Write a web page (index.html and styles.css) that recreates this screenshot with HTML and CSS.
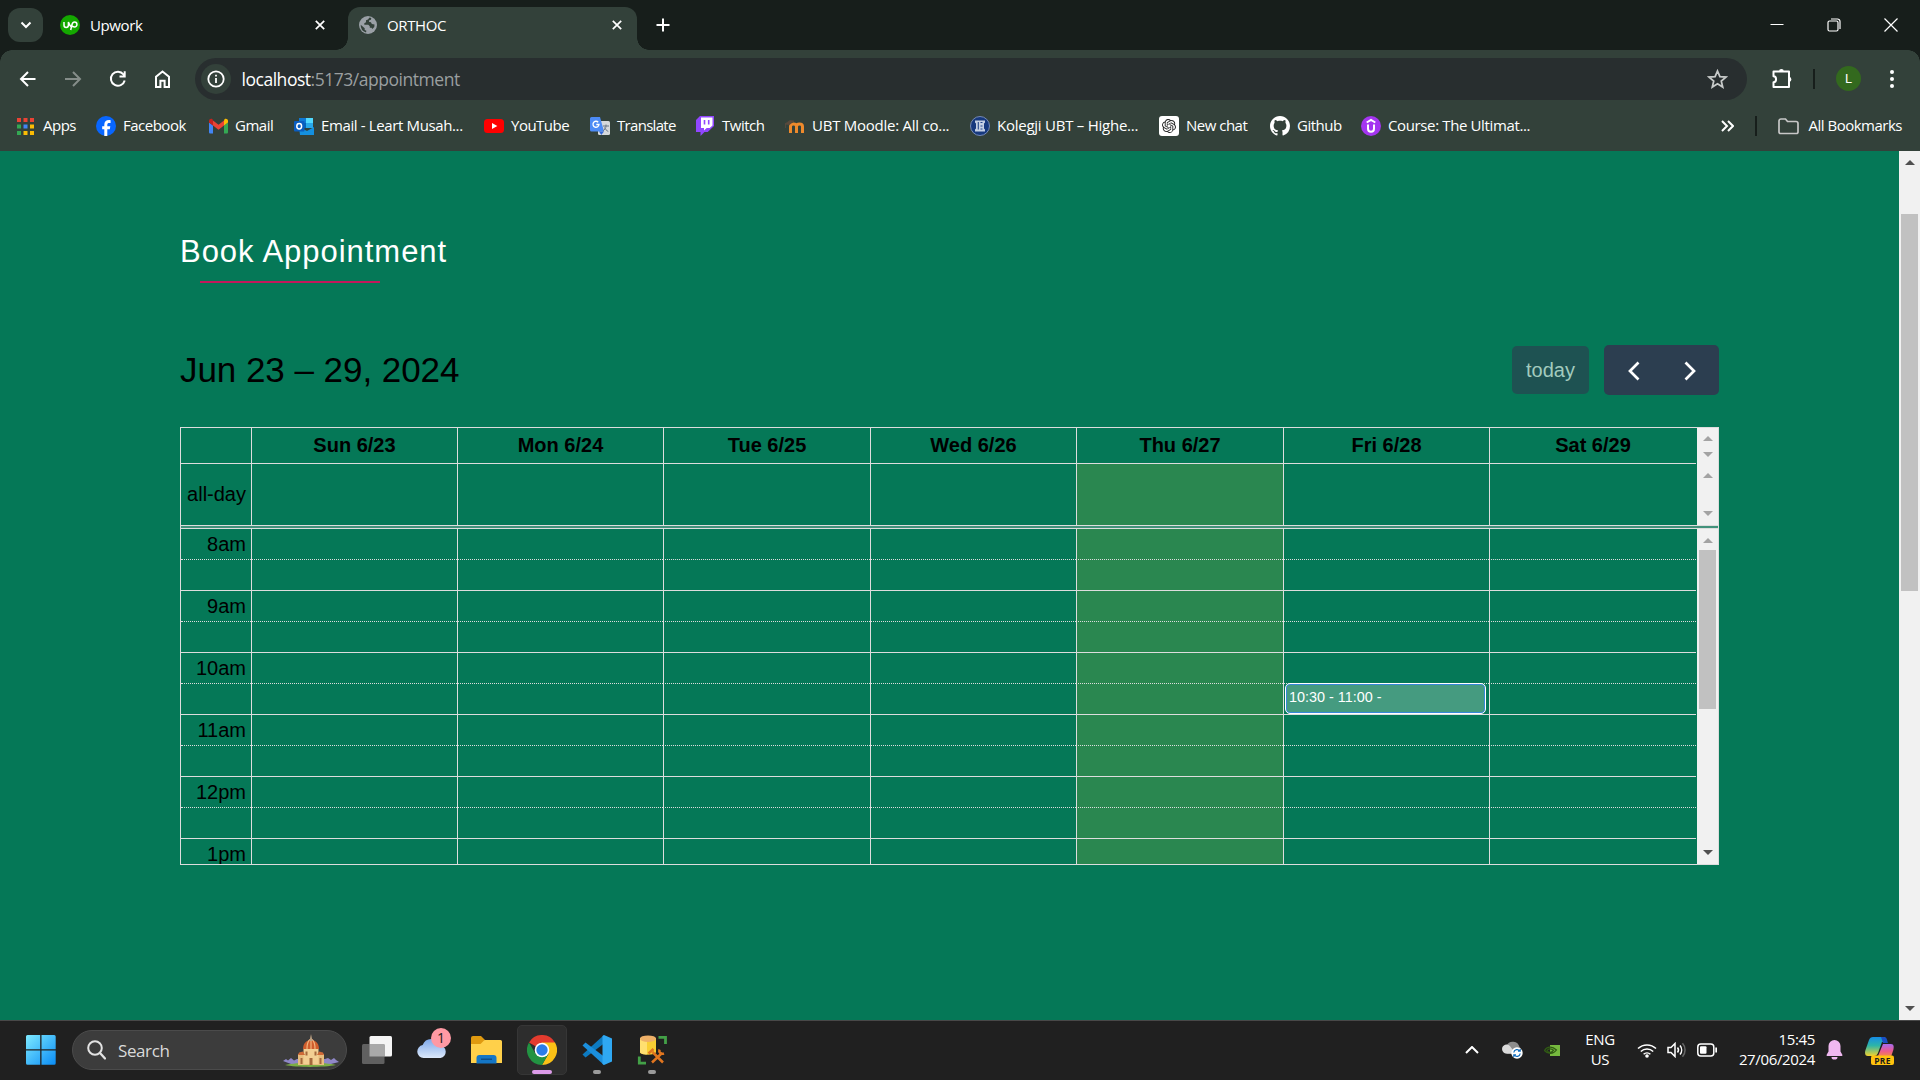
FILE: index.html
```html
<!DOCTYPE html>
<html lang="en">
<head>
<meta charset="utf-8">
<title>ORTHOC</title>
<link rel="stylesheet" href="styles.css">
</head>
<body>
<div class="screen">
  <header class="tabstrip">
    <button class="tab-search"><svg width="12" height="8" viewBox="0 0 12 8"><path d="M1.5 1.5 6 6l4.500-4.500" class="ln w2"/></svg></button>
    <div class="tab idle">
      <svg width="20" height="20" viewBox="0 0 20 20"><circle cx="10" cy="10" r="10" fill="#14a800"/><path d="M4 7v3.200a2.200 2.200 0 0 0 4.400 0V7c1 3 2 4.500 3.400 5M10.700 15l1.300-5.500c.5-1.800 1.500-2.500 2.500-2.500a2.400 2.400 0 0 1 0 4.900c-1.500 0-2.500-.8-3.500-2" class="ln w15"/></svg>
      <span class="tab-title upwork">Upwork</span>
      <svg class="x" width="10" height="10" viewBox="0 0 10 10"><path d="M.8.8l8.400 8.400M9.200.8.8 9.200" class="ln w17"/></svg>
    </div>
    <div class="tab active">
      <svg width="18" height="18" viewBox="0 0 18 18"><circle cx="9" cy="9" r="9" fill="#9aa0a6"/><path d="M10.500 1.500 9 3.600l-2 .7v1.900l-1.700 1v1.500h4l1.500 1.600v1.400h1.700l.8 1.200 2-1.800.2-2.700-2.600-.4-1-1.700-2-.6.400-1.500 1.600-.4.4-1.700zM1.700 8.800l4 3.500v1.600l1.700.9-.4 1.700A7.700 7.700 0 0 1 1.700 8.800z" fill="#33413a"/></svg>
      <span class="tab-title orthoc">ORTHOC</span>
      <svg class="x" width="10" height="10" viewBox="0 0 10 10"><path d="M.8.8l8.400 8.400M9.200.8.8 9.200" class="ln w17"/></svg>
    </div>
    <svg class="plus" width="14" height="14" viewBox="0 0 14 14"><path d="M7 .5v13M.5 7h13" class="ln w2"/></svg>
    <div class="win-controls">
      <svg width="14" height="14" viewBox="0 0 14 14"><path d="M.5 6.500h13" class="ln w1"/></svg>
      <svg width="14" height="14" viewBox="0 0 14 14"><rect x="1" y="3" width="10" height="10" rx="1.500" class="ln w12"/><path d="M4 1h6.500A2.500 2.500 0 0 1 13 3.500V11" class="ln w12"/></svg>
      <svg width="14" height="14" viewBox="0 0 14 14"><path d="M.5.5l13 13M13.500.5l-13 13" class="ln w12"/></svg>
    </div>
  </header>

  <nav class="toolbar">
    <div class="nav-icons">
      <svg width="18" height="18" viewBox="0 0 18 18"><path d="M16.500 9H2.500M9 2 2 9l7 7" class="ln w2"/></svg>
      <svg class="dim" width="18" height="18" viewBox="0 0 18 18"><path d="M1 9h14.500M9 2l7 7-7 7" class="ln w2"/></svg>
      <svg width="18" height="18" viewBox="0 0 18 18"><path d="M15.700 10.500A7 7 0 1 1 14.500 4.500L16 6.300M15.700 1.200v5.300H10.500" class="ln w2"/></svg>
      <svg width="18" height="20" viewBox="0 0 18 20"><path d="M2 18V7.800L8.500 2.500 15 7.800V18h-4.400v-6.300H6.400V18z" class="ln w2"/></svg>
    </div>
    <div class="omnibox">
      <span class="site-info"><svg width="18" height="18" viewBox="0 0 18 18"><circle cx="9" cy="9" r="7.700" class="ln w18"/><path d="M9 8v5M9 4.800v1.700" class="ln w18"/></svg></span>
      <span class="url"><b>localhost</b>:5173/appointment</span>
      <svg class="star" width="21" height="20" viewBox="0 0 21 20"><path d="M10.500 2l2.400 5.600 6 .5-4.600 4 1.400 5.900-5.200-3.200L5.300 18l1.400-5.900-4.600-4 6-.5z" fill="none" stroke="#c7cac9" stroke-width="1.800"/></svg>
    </div>
    <svg class="ext" width="22" height="22" viewBox="0 0 22 22"><path d="M2.500 3.500H18V19H2.500v-4.700c3.400-.2 3.400-5.800 0-6z" class="ln w2" stroke-linejoin="round"/><path d="M8 3.500a2.400 2.400 0 0 1 4.800 0zM18 9a2.400 2.400 0 0 1 0 4.800z" fill="#fff"/></svg>
    <i class="sep"></i>
    <span class="avatar">L</span>
    <svg class="kebab" width="6" height="22" viewBox="0 0 6 22"><g fill="#fff"><circle cx="3" cy="4" r="2"/><circle cx="3" cy="11" r="2"/><circle cx="3" cy="18" r="2"/></g></svg>
  </nav>

  <nav class="bookmarks">
    <div class="bm-list">
      <a><svg class="apps" width="17" height="17" viewBox="0 0 17 17"><path d="M0 0h4v4H0zM6.500 0h4v4h-4zM13 0h4v4h-4z" fill="#ea4335"/><path d="M0 6.500h4v4H0z" fill="#34a853"/><path d="M6.500 6.500h4v4h-4z" fill="#4285f4"/><path d="M13 6.500h4v4h-4zM6.500 13h4v4h-4zM13 13h4v4h-4z" fill="#fbbc04"/><path d="M0 13h4v4H0z" fill="#34a853"/></svg><span>Apps</span></a>
      <a><svg width="20" height="20" viewBox="0 0 20 20"><circle cx="10" cy="10" r="10" fill="#0866ff"/><path d="M8.300 20v-6.700H6.200v-3h2.100V9c0-3.400 1.600-5 4.800-5 .6 0 1.200.1 1.500.2V7h-1.300c-1.500 0-2 .6-2 2v1.300h3l-.5 3h-2.500V20z" fill="#fff"/></svg><span>Facebook</span></a>
      <a><svg width="19" height="20" viewBox="0 0 19 20"><path d="M1.300 17.500H4V9.500L0 6.500v9.700c0 .7.600 1.300 1.300 1.300z" fill="#4285f4"/><path d="M15 17.500h2.700c.7 0 1.300-.6 1.300-1.300V6.500l-4 3z" fill="#34a853"/><path d="M15 4.500v5l4-3V5c0-2-2.200-2.700-3.500-1.700z" fill="#fbbc04"/><path d="M4 9.500v-5l5.500 4.200L15 4.500v5l-5.500 4.200z" fill="#ea4335"/><path d="M0 5v1.500l4 3v-5L3.500 3.300C2.200 2.300 0 3 0 5z" fill="#c5221f"/></svg><span>Gmail</span></a>
      <a><svg width="20" height="20" viewBox="0 0 20 20"><path d="M5 2h13a1 1 0 0 1 1 1v8H5z" fill="#0f78d4"/><path d="M12 2h7v5h-7z" fill="#50d9ff"/><path d="M5 7h7v5H5z" fill="#0364b8"/><path d="M12 7h7v5h-7z" fill="#28a8ea"/><path d="M5 11l8 4 7-4v8H6z" fill="#1490df"/><rect y="5" width="10.500" height="10.500" rx="1" fill="#0a5dc0"/><ellipse cx="5.200" cy="10.200" rx="2.400" ry="2.700" class="ln w15"/></svg><span class="ls-email">Email - Leart Musah...</span></a>
      <a><svg width="20" height="20" viewBox="0 0 20 20"><rect y="3" width="20" height="14" rx="3.500" fill="#f00"/><path d="M8 7l5.300 3L8 13z" fill="#fff"/></svg><span>YouTube</span></a>
      <a><svg width="20" height="20" viewBox="0 0 20 20"><rect x="8" y="5" width="12" height="14" rx="1.500" fill="#d6d9dc"/><path d="M1.500 1H10l4 14.500H1.500A1.500 1.500 0 0 1 0 14V2.500A1.500 1.500 0 0 1 1.500 1z" fill="#4c8bf5"/><path d="M9 15.500h5L11.300 19z" fill="#3367d6"/><path d="M8.200 6.200A3 3 0 1 0 9 8.500H6.300" class="ln w13"/><path d="M13 10h6M16 8.500V10c0 2-1.500 4-3 4.700M14.500 11.500c.8 1.800 2 3 3.800 4" fill="none" stroke="#6b7785"/></svg><span class="ls-tight">Translate</span></a>
      <a><svg width="19" height="20" viewBox="0 0 19 20"><path d="M4 0 0 4v12h4.500v4l4-4h3.200L18 10V0z" fill="#9146ff"/><path d="M5 1.500h11.500v8L13.700 12h-3L8 14.500V12H5z" fill="#fff"/><path d="M8.500 4v4.500M12.700 4v4.500" stroke="#9146ff" stroke-width="1.600"/></svg><span>Twitch</span></a>
      <a><svg width="20" height="20" viewBox="0 0 20 20"><path d="M5.500 17V10.500c0-3.500 6-3.500 6 0V17m0-6.500c0-3.500 6-3.500 6 0V17" fill="none" stroke="#ee8a2c" stroke-width="3"/><path d="M0 8l5-3.500 4 .5-4.500 3.500zM.5 8v4" fill="#5b4a3c" stroke="#5b4a3c" stroke-width=".8"/></svg><span class="ls-wide">UBT Moodle: All co...</span></a>
      <a><svg width="20" height="20" viewBox="0 0 20 20"><circle cx="10" cy="10" r="9.500" fill="#17397e" stroke="#7589b6"/><path d="M5 4.500h10v2l-1 1v5l1 1v2H5v-2l1-1v-5l-1-1z" fill="#c5d0e4"/><path d="M8.300 6v7.500M10.500 6.500h2M10.500 10h2M10.500 13h2" stroke="#27488b" stroke-width="1.100"/></svg><span class="ls-wide">Kolegji UBT – Highe...</span></a>
      <a><svg width="20" height="20" viewBox="0 0 20 20"><rect width="20" height="20" rx="3" fill="#fff"/><path transform="translate(3 3) scale(.583)" fill="#222" d="M22.282 9.821a5.985 5.985 0 0 0-.516-4.910 6.046 6.046 0 0 0-6.510-2.900A6.065 6.065 0 0 0 4.981 4.182a5.985 5.985 0 0 0-3.998 2.900 6.046 6.046 0 0 0 .743 7.097 5.980 5.980 0 0 0 .510 4.911 6.051 6.051 0 0 0 6.515 2.900A5.985 5.985 0 0 0 13.260 24a6.056 6.056 0 0 0 5.772-4.206 5.990 5.990 0 0 0 3.998-2.900 6.056 6.056 0 0 0-.748-7.073zM13.260 22.430a4.476 4.476 0 0 1-2.876-1.041l.142-.080 4.778-2.758a.795.795 0 0 0 .393-.681v-6.737l2.020 1.169a.071.071 0 0 1 .038.052v5.583a4.504 4.504 0 0 1-4.495 4.493zM3.600 18.304a4.471 4.471 0 0 1-.535-3.014l.142.085 4.783 2.758a.771.771 0 0 0 .780 0l5.843-3.369v2.332a.080.080 0 0 1-.033.062L9.740 19.950a4.499 4.499 0 0 1-6.140-1.646zM2.341 7.896a4.485 4.485 0 0 1 2.365-1.973V11.600a.766.766 0 0 0 .388.676l5.814 3.355-2.020 1.168a.076.076 0 0 1-.071 0l-4.830-2.786A4.504 4.504 0 0 1 2.341 7.896zm16.596 3.855-5.833-3.387L15.119 7.200a.076.076 0 0 1 .071 0l4.830 2.791a4.494 4.494 0 0 1-.676 8.105v-5.678a.790.790 0 0 0-.407-.667zm2.010-3.023-.141-.085-4.774-2.782a.776.776 0 0 0-.785 0L9.409 9.230V6.897a.066.066 0 0 1 .028-.061l4.830-2.787a4.499 4.499 0 0 1 6.680 4.660zM8.307 12.863l-2.020-1.164a.080.080 0 0 1-.038-.057V6.074a4.499 4.499 0 0 1 7.376-3.453l-.142.080-4.778 2.758a.795.795 0 0 0-.393.682zm1.097-2.366 2.602-1.500 2.607 1.500v3l-2.597 1.500-2.607-1.500z"/></svg><span>New chat</span></a>
      <a><svg width="20" height="20" viewBox="0 0 16 16"><path fill="#fff" d="M8 0C3.580 0 0 3.580 0 8c0 3.540 2.290 6.530 5.470 7.590.4.070.55-.17.55-.38 0-.19-.01-.82-.01-1.490-2.010.37-2.530-.49-2.690-.94-.09-.23-.48-.94-.82-1.130-.28-.15-.68-.52-.01-.53.63-.01 1.080.58 1.230.82.72 1.210 1.870.87 2.330.66.070-.52.28-.87.51-1.070-1.780-.2-3.640-.89-3.640-3.950 0-.87.31-1.590.82-2.150-.08-.2-.36-1.020.08-2.120 0 0 .67-.21 2.200.82.640-.18 1.320-.27 2-.27s1.360.09 2 .27c1.530-1.040 2.200-.82 2.200-.82.44 1.100.16 1.920.08 2.120.51.56.82 1.270.82 2.150 0 3.070-1.870 3.750-3.650 3.950.29.25.54.73.54 1.480 0 1.070-.01 1.930-.01 2.200 0 .21.15.46.55.38A8.010 8.010 0 0 0 16 8c0-4.420-3.580-8-8-8z"/></svg><span>Github</span></a>
      <a><svg width="20" height="20" viewBox="0 0 20 20"><circle cx="10" cy="10" r="10" fill="#a435f0"/><path d="M5.700 6.500 10 4l4.300 2.500M7 8.500v4.300c0 4 6 4 6 0V8.500" class="ln w2"/></svg><span class="ls-email">Course: The Ultimat...</span></a>
    </div>
    <svg class="more" width="13" height="12" viewBox="0 0 13 12"><path d="M1 1l5 5-5 5M7 1l5 5-5 5" class="ln w2"/></svg>
    <i class="sep"></i>
    <svg class="folder" width="21" height="17" viewBox="0 0 21 17"><path d="M1 14V3a2 2 0 0 1 2-2h4.500l2 2.500H18a2 2 0 0 1 2 2V14a1.500 1.500 0 0 1-1.500 1.500h-16A1.500 1.500 0 0 1 1 14z" fill="none" stroke="#c7c7c7" stroke-width="1.700"/></svg>
    <span class="all">All Bookmarks</span>
  </nav>

  <main class="viewport">
    <section class="page">
      <h2 class="heading">Book Appointment</h2>
      <div class="rule"></div>
      <div class="cal-toolbar">
        <h1>Jun 23 – 29, 2024</h1>
        <button class="today-btn">today</button>
        <div class="btn-group">
          <svg width="12" height="20" viewBox="0 0 12 20"><path d="M10.500 1.500 2 10l8.500 8.500" class="ln w27"/></svg>
          <svg width="12" height="20" viewBox="0 0 12 20"><path d="M1.500 1.500 10 10l-8.500 8.500" class="ln w27"/></svg>
        </div>
      </div>
      <div class="calendar">
        <div class="cal-row head">
          <span class="axis"></span><b>Sun 6/23</b><b>Mon 6/24</b><b>Tue 6/25</b><b>Wed 6/26</b><b>Thu 6/27</b><b>Fri 6/28</b><b>Sat 6/29</b>
          <i class="sb"><i class="arrow up"></i><i class="arrow down"></i></i>
        </div>
        <div class="cal-row allday">
          <span class="axis">all-day</span><span></span><span></span><span></span><span></span><span class="now"></span><span></span><span></span>
          <i class="sb"><i class="arrow up"></i><i class="arrow down"></i></i>
        </div>
        <div class="divider"></div>
        <div class="cal-body">
          <div class="slots">
            <div class="cal-row slot"><span class="axis">8am</span><span></span><span></span><span></span><span></span><span class="now"></span><span></span><span></span></div>
            <div class="cal-row slot minor"><span class="axis"></span><span></span><span></span><span></span><span></span><span class="now"></span><span></span><span></span></div>
            <div class="cal-row slot"><span class="axis">9am</span><span></span><span></span><span></span><span></span><span class="now"></span><span></span><span></span></div>
            <div class="cal-row slot minor"><span class="axis"></span><span></span><span></span><span></span><span></span><span class="now"></span><span></span><span></span></div>
            <div class="cal-row slot"><span class="axis">10am</span><span></span><span></span><span></span><span></span><span class="now"></span><span></span><span></span></div>
            <div class="cal-row slot minor"><span class="axis"></span><span></span><span></span><span></span><span></span><span class="now"></span><span class="booked"><span class="event">10:30 - 11:00 -</span></span><span></span></div>
            <div class="cal-row slot"><span class="axis">11am</span><span></span><span></span><span></span><span></span><span class="now"></span><span></span><span></span></div>
            <div class="cal-row slot minor"><span class="axis"></span><span></span><span></span><span></span><span></span><span class="now"></span><span></span><span></span></div>
            <div class="cal-row slot"><span class="axis">12pm</span><span></span><span></span><span></span><span></span><span class="now"></span><span></span><span></span></div>
            <div class="cal-row slot minor"><span class="axis"></span><span></span><span></span><span></span><span></span><span class="now"></span><span></span><span></span></div>
            <div class="cal-row slot"><span class="axis">1pm</span><span></span><span></span><span></span><span></span><span class="now"></span><span></span><span></span></div>
          </div>
          <i class="sb body-sb"><i class="arrow up"></i><i class="thumb"></i><i class="arrow down dark"></i></i>
        </div>
      </div>
    </section>
    <i class="page-sb"><i class="arrow up dark"></i><i class="thumb"></i><i class="arrow down dark"></i></i>
  </main>

  <footer class="taskbar">
    <svg class="win" width="30" height="30" viewBox="0 0 30 30"><defs><linearGradient id="wg" x2="1" y2="1"><stop stop-color="#7eeaff"/><stop offset="1" stop-color="#0a8cf5"/></linearGradient></defs><path d="M1.500 0h12.700v14.200H0V1.500A1.500 1.500 0 0 1 1.500 0zM15.500 0h12.700A1.500 1.500 0 0 1 29.700 1.500v12.700H15.500zM0 15.500h14.200v14.200H1.500A1.500 1.500 0 0 1 0 28.200zM15.500 15.500h14.200v12.700a1.500 1.500 0 0 1-1.500 1.500H15.500z" fill="url(#wg)"/></svg>
    <div class="search">
      <svg width="19" height="20" viewBox="0 0 19 20"><circle cx="8" cy="8" r="6.800" fill="none" stroke="#e3e3e3" stroke-width="2"/><path d="M13 13l5 5.500" stroke="#e3e3e3" stroke-width="2.300" stroke-linecap="round"/></svg>
      <span>Search</span>
      <svg class="duomo" width="56" height="33" viewBox="0 0 56 33"><path d="M0 27l3-2 2 1.500L8 24l3 2.500 3-1.500h28l3-1 3 2 3-2 2 2 3 2-8 2H8z" fill="#8f87c7"/><path d="M2 31c12-3 40-3 51 0-12 2.500-40 2.500-51 0z" fill="#7cae45"/><path d="M15 20h26v11H15z" fill="#e6bd7f"/><path d="M20.500 15h15v15h-15z" fill="#f2cf93"/><path d="M20 15c0-12 16-12 16 0z" fill="#cf5d2c"/><path d="M24 15c0-5 1-8 3-9.500M32 15c0-5-1-8-3-9.500M28 15V6" stroke="#f0b27c" stroke-width="1.200" fill="none"/><path d="M26.500 7 28 0l1.500 7z" fill="#b9a083"/><path d="M15 21l1-2.500 4-1 2 3.500zM34 21l2-3.500 4 1 1 2.500z" fill="#cf6a37"/><path d="M22.500 17.500h2v4h-2zM31.500 17.500h2v4h-2zM26.500 24h3v7h-3zM17.500 24h2v6h-2zM36.500 24h2v6h-2z" fill="#a3683c"/></svg>
    </div>
    <svg class="taskview" width="30" height="30" viewBox="0 0 30 30"><rect x="7.500" y="1" width="22.500" height="20.500" rx="1.500" fill="#f5f5f5"/><rect y="9" width="22.500" height="20" rx="1.500" fill="#606060"/><path d="M7.500 9h15v12.500h-15z" fill="#a9a9a9"/></svg>
    <div class="cloud">
      <svg width="30" height="22" viewBox="0 0 30 22"><defs><linearGradient id="cg" x2="0" y2="1"><stop stop-color="#7fa9ea"/><stop offset="1" stop-color="#dce9fb"/></linearGradient></defs><path d="M6.500 21a6.500 6.500 0 0 1-.8-12.900A9 9 0 0 1 22.800 8.500 6.300 6.300 0 0 1 23.500 21z" fill="url(#cg)"/></svg>
      <span class="badge">1</span>
    </div>
    <svg class="explorer" width="31" height="28" viewBox="0 0 31 28"><path d="M0 2a2 2 0 0 1 2-2h8l3.500 3.500V8H0z" fill="#e09a10"/><path d="M0 8h9.500l4-4H29.500A1.500 1.500 0 0 1 31 5.500V27H0z" fill="#ffd04a"/><path d="M5.500 27.500V22a3 3 0 0 1 3-3h14a3 3 0 0 1 3 3v5.500z" fill="#1476c6"/><path d="M10 22.500h11V24H10z" fill="#0b4f8d"/></svg>
    <div class="app current"><svg width="30" height="30" viewBox="0 0 30 30"><path d="M15 15 2 7.500A15 15 0 0 1 28 7.500z" fill="#e33b2e"/><path d="M15 7.500h13A15 15 0 0 1 15 30l6.500-11.200z" fill="#fbc116"/><path d="M8.500 18.800 2 7.500A15 15 0 0 0 15 30l6.500-11.200z" fill="#229342"/><circle cx="15" cy="15" r="7.300" fill="#fff"/><circle cx="15" cy="15" r="5.700" fill="#2b7de9"/></svg><i class="mark"></i></div>
    <div class="app"><svg width="30" height="30" viewBox="0 0 30 30"><path d="M22 0 .5 19.500 3.500 22.500 22 8.500z" fill="#0d7ac0"/><path d="M22 30 .5 10.500 3.500 7.500 22 21.500z" fill="#1b8fdd"/><path d="M22 0l8 3.500v23L22 30l-1.500-1V1z" fill="#2fa8f3"/></svg><i class="mark"></i></div>
    <div class="app"><svg width="30" height="30" viewBox="0 0 30 30"><path d="M3 3v14c0 3.500 16 3.500 16 0V3z" fill="#f9cf33"/><path d="M3 3v14c0 1.500 3 2.500 7 2.600V3z" fill="#ffe070"/><ellipse cx="11" cy="3.700" rx="8" ry="3.300" fill="#eeb068"/><path d="M21.500 2.300h7V9M2.300 21.500v6.700H9" fill="none" stroke="#43a047" stroke-width="2.800"/><path d="M15 27.500 25 18M26 27.500 15.500 17M11.500 18.500l5-4.500M22.500 14.500c-1 3 1.500 5 4.500 4" stroke="#e0751f" stroke-width="2.500" fill="none"/></svg><i class="mark"></i></div>
    <div class="tray">
      <svg class="t-chev" width="14" height="8" viewBox="0 0 14 8"><path d="M1 7l6-6 6 6" class="ln w2"/></svg>
      <svg class="t-cloud" width="21" height="18" viewBox="0 0 21 18"><path d="M5 13A4.800 4.800 0 0 1 4.500 4.500 7 7 0 0 1 17.500 6 4 4 0 0 1 17 13z" fill="#8d8d8d"/><path d="M4.500 12.500a4.500 4.500 0 1 1 3.800-7l5 7z" fill="#dadada"/><circle cx="15" cy="12" r="5.700" fill="#fff"/><path d="M11.800 11.500a3.300 3.300 0 0 1 6-1.500M18.200 12.500a3.300 3.300 0 0 1-6 1.500M18.200 8v2.200H16M11.800 16v-2.200H14" fill="none" stroke="#0f6cbd" stroke-width="1.200"/></svg>
      <svg class="t-nv" width="16" height="11" viewBox="0 0 16 11"><path d="M6 0h10v11H6z" fill="#76b93e"/><path d="M.5 5.500C3 1.500 8 .8 12.500 5 9 9.500 4 9.500.5 5.500zM3 5.500c1.500-2 4-2.200 6.500-.2C7.500 8 4.500 8 3 5.500z" fill="none" stroke="#315c14" stroke-width="1.200"/></svg>
      <div class="lang">ENG<br>US</div>
      <svg class="t-wifi" width="20" height="15" viewBox="0 0 20 15"><path d="M1 5.500a13 13 0 0 1 18 0M3.800 8.500a9 9 0 0 1 12.400 0M6.600 11.300a5 5 0 0 1 6.800 0" class="ln w15"/><circle cx="10" cy="13" r="1.800" fill="#fff"/></svg>
      <svg class="t-vol" width="20" height="16" viewBox="0 0 20 16"><path d="M1 5.500h3L8 1.500v13L4 10.500H1z" class="ln w15"/><path d="M10.500 5.500a4 4 0 0 1 0 5M13 3.500a7 7 0 0 1 0 9" class="ln w15"/><path d="M15.500 1.300a10 10 0 0 1 0 13.400" fill="none" stroke="#666" stroke-width="1.500"/></svg>
      <svg class="t-bat" width="20" height="14" viewBox="0 0 20 14"><rect x=".8" y="1" width="16" height="12" rx="3" class="ln w15"/><rect x="3" y="3.300" width="6.500" height="7.500" rx="1" fill="#fff"/><path d="M18.300 4.500h1.700v5h-1.700z" fill="#fff"/></svg>
      <div class="clock">15:45<br>27/06/2024</div>
      <svg class="t-bell" width="17" height="20" viewBox="0 0 17 20"><path d="M8.500 0a6 6 0 0 1 6 6v5.500l2 3.500c0 .8-.5 1-1 1h-14c-.5 0-1-.2-1-1l2-3.500V6a6 6 0 0 1 6-6zM5.500 17h6a3 2.600 0 0 1-6 0z" fill="#efb8f0"/></svg>
      <svg class="t-cop" width="30" height="29" viewBox="0 0 30 29"><defs><linearGradient id="ca" x2="0" y2="1"><stop stop-color="#168de6"/><stop offset=".45" stop-color="#2cb5a8"/><stop offset="1" stop-color="#f2d22e"/></linearGradient><linearGradient id="cb" x2="0" y2="1"><stop stop-color="#a76cf0"/><stop offset=".6" stop-color="#ee5a8c"/><stop offset="1" stop-color="#f3874b"/></linearGradient></defs><path d="M8 1h10c3 0 3 2 4 5h-5l-4 11c-1 2-2 3-4 3H3c-3 0-3.500-3-2.500-6L4 4c.8-2 2-3 4-3z" fill="url(#ca)"/><path d="M16 1h3c3 0 3 3 4 6h-5z" fill="#1a4fc4"/><path d="M18 8h8c3 0 3 3 2.300 6l-2 6H13z" fill="url(#cb)"/><rect x="6" y="19.500" width="23" height="9.500" rx="2" fill="#ffc20e"/><text x="17.500" y="27.500" text-anchor="middle" class="pre">PRE</text></svg>
    </div>
  </footer>
</div>
</body>
</html>
```
FILE: styles.css
```css
* { box-sizing: border-box; }
body { margin: 0; overflow: hidden; background: #202020; }
h1, h2 { margin: 0; font-weight: 400; }
button { border: 0; padding: 0; font: inherit; }
svg { display: block; flex: none; }

.screen {
  width: 1920px; height: 1080px; display: flex; flex-direction: column;
  font-family: "Open Sans", "Noto Sans", sans-serif; color: #fff;
}
.ln { fill: none; stroke: #fff; }
.w1 { stroke-width: 1; } .w12 { stroke-width: 1.2; } .w13 { stroke-width: 1.3; }
.w15 { stroke-width: 1.5; } .w17 { stroke-width: 1.7; } .w18 { stroke-width: 1.8; }
.w2 { stroke-width: 2; } .w27 { stroke-width: 2.7; }

/* tab strip */
.tabstrip { height: 50px; flex: none; display: flex; align-items: center; background: #171e1b; padding-left: 8px; }
.tab-search { width: 35px; height: 34px; border-radius: 12px; background: #33413a; display: grid; place-items: center; }
.tab { display: flex; align-items: center; }
.tab-title { font-size: 15px; line-height: 20px; white-space: nowrap; }
.tab .x { margin-left: auto; }
.idle { width: 305px; padding: 0 23px 0 17px; gap: 10px; }
.active { position: relative; width: 289px; height: 43px; margin-top: 7px; padding: 0 15px 7px 11px; gap: 10px; background: #33413a; border-radius: 12px 12px 0 0; }
.active::before, .active::after { content: ""; position: absolute; bottom: 0; width: 12px; height: 12px; }
.active::before { left: -12px; background: radial-gradient(circle at 0 0, transparent 11.500px, #33413a 12px); }
.active::after { right: -12px; background: radial-gradient(circle at 100% 0, transparent 11.500px, #33413a 12px); }
.upwork, .orthoc { letter-spacing: -.4px; }
.plus { margin-left: 18.500px; }
.win-controls { margin-left: auto; display: flex; gap: 43px; padding-right: 22px; }

/* toolbar */
.toolbar {
  height: 58px; flex: none; display: flex; align-items: center;
  background:
    radial-gradient(circle at 12px 12px, #33413a 11.500px, #171e1b 12px) 0 0 / 12px 12px no-repeat,
    radial-gradient(circle at 0 12px, #33413a 11.500px, #171e1b 12px) 100% 0 / 12px 12px no-repeat,
    #33413a;
}
.nav-icons { display: flex; align-items: center; gap: 27px; width: 195px; padding-left: 18.500px; }
.dim { opacity: .4; }
.omnibox { width: 1552px; height: 42px; border-radius: 21px; background: #282e2f; display: flex; align-items: center; padding: 0 19px 0 6px; }
.site-info { width: 30px; height: 30px; border-radius: 50%; background: #33413a; display: grid; place-items: center; }
.url { margin-left: 10.500px; font-size: 17.500px; line-height: 24px; letter-spacing: -.47px; color: #9a9fa0; }
.url b { font-weight: 400; color: #fff; }
.star { margin-left: auto; }
.ext { margin-left: 24px; }
.sep { width: 2px; height: 20px; background: #171e1b; flex: none; }
.toolbar .sep { margin-left: 20px; }
.avatar { width: 25px; height: 25px; margin: -2px 0 0 21px; border-radius: 50%; background: #33691e; font: 13px/25px Roboto, sans-serif; text-align: center; }
.kebab { margin-left: 28px; }

/* bookmarks */
.bookmarks { height: 43px; flex: none; display: flex; align-items: center; padding-bottom: 7px; background: #33413a; font-size: 15px; line-height: 20px; letter-spacing: -.5px; white-space: nowrap; }
.bm-list { width: 1720.500px; padding-left: 17px; display: grid; grid-template-columns: 79px 113px 85px 190px 106px 106px 89px 185px 189px 111px 91px 180px; }
.bm-list a { display: flex; align-items: center; gap: 7px; }
.bm-list span, .all { padding-bottom: 2px; }
.ls-email { letter-spacing: -.37px; }
.ls-tight { letter-spacing: -.7px; }
.ls-wide { letter-spacing: -.25px; }
.apps { margin-right: 2px; }
.bookmarks .sep { margin-left: 21.500px; }
.folder { margin: 0 10px 0 20.500px; }

/* page */
.viewport { height: 869px; flex: none; display: flex; background: #057857; font-family: "Liberation Sans", Arial, sans-serif; }
.page { width: 1899px; padding: 81px 180px 0; color: #000; }
.heading { font-size: 31px; line-height: 40px; letter-spacing: .97px; color: #fff; }
.rule { width: 180px; height: 2px; margin: 9px 0 0 20px; background: #c2185b; }
.cal-toolbar { display: flex; align-items: center; margin-top: 62px; height: 50px; }
.cal-toolbar h1 { font-size: 35px; line-height: 40px; letter-spacing: -.05px; margin-right: auto; }
.today-btn { width: 77px; height: 48px; margin-right: 15px; border-radius: 5px; background: rgba(44, 62, 80, .65); color: #a2cbbe; font-size: 20px; }
.btn-group { width: 115px; height: 50px; display: flex; align-items: center; justify-content: space-between; padding: 2px 23.500px 0; background: #2c3e50; border-radius: 5px; }

/* calendar */
.calendar { width: 1539px; height: 438px; margin-top: 32px; border: 1px solid #ddd; font-size: 20px; line-height: 23px; overflow: hidden; }
.cal-row { display: grid; grid-template-columns: 70px 206px 206px 207px 206px 207px 206px 207px 22px; }
.cal-row > span, .cal-row > b { border-left: 1px solid #ddd; }
.cal-row > .axis { border-left: 0; text-align: right; padding-right: 5px; }
.cal-row > .now { background: rgba(255, 220, 40, .15); }
.cal-row > .sb { margin-left: 1px; }
.head { height: 35px; }
.head b { text-align: center; line-height: 35px; }
.allday { height: 62px; }
.allday > span { border-top: 1px solid #ddd; }
.allday > .axis { line-height: 61px; }
.divider { height: 4px; border: 1px solid #ddd; border-width: 1px 0; background: rgba(208, 208, 208, .3); }
.cal-body { display: flex; height: 335px; overflow: hidden; }
.slots { width: 1516px; }
.slot { height: 31px; grid-template-rows: 31px; }
.slot:first-child { margin-top: -1px; }
.slot > span { border-top: 1px solid #ddd; }
.minor > span { border-top-style: dotted; }
.slot > .axis { line-height: 31px; }
.booked { padding-left: 1px; min-width: 0; }
.event { position: relative; top: -1px; display: block; width: 201px; height: 31px; border: 1px solid #fff; box-shadow: inset 0 0 0 1px #3788d8; border-radius: 5px; background: #459b80; color: #fff; font-size: 14.400px; line-height: 27px; padding-left: 3px; white-space: nowrap; }

/* scrollbars */
.sb { width: 21px; background: #f1f1f1; display: flex; flex-direction: column; align-items: center; justify-content: space-between; }
.arrow { border: 5px solid transparent; width: 10px; height: 5px; }
.arrow.up { border-top: 0; border-bottom-color: #a3a3a3; }
.arrow.down { border-bottom: 0; border-top-color: #a3a3a3; }
.arrow.up.dark { border-bottom-color: #505050; }
.arrow.down.dark { border-top-color: #505050; }
.head .sb { padding: 8px 0 6px; }
.allday .sb { padding: 10px 0 9px; }
.body-sb { height: 335px; padding: 9px 0 9px; justify-content: flex-start; }
.thumb { width: 17px; background: #c1c1c1; }
.body-sb .thumb { height: 159px; margin-top: 7px; }
.sb .down { margin-top: auto; }
.page-sb { width: 21px; background: #f1f1f1; display: flex; flex-direction: column; align-items: center; padding: 9px 0 9px; }
.page-sb .thumb { height: 377px; margin-top: 49px; }
.page-sb .down { margin-top: auto; }

/* taskbar */
.taskbar { height: 60px; flex: none; display: flex; align-items: center; padding-left: 26px; background: #202020; box-shadow: inset 0 1px #484848; }
.search { width: 275px; height: 40px; margin-left: 16px; border-radius: 20px; background: #3c3c3c; border: 1px solid #4b4b4b; display: flex; align-items: center; padding: 0 7px 0 14px; font-size: 17px; color: #dadada; letter-spacing: -.4px; }
.search span { margin-left: 12px; }
.duomo { margin-left: auto; }
.taskview { margin-left: 15px; }
.cloud { position: relative; margin-left: 25px; width: 30px; height: 22px; }
.cloud svg { margin-top: -2px; }
.badge { position: absolute; left: 14px; top: -11px; width: 20px; height: 20px; border-radius: 50%; background: #ff99a4; color: #1b1b1b; font-size: 14px; line-height: 20px; text-align: center; }
.explorer { margin-left: 24px; margin-right: 14.500px; }
.app { width: 50px; height: 50px; margin-right: 5px; border-radius: 5px; display: flex; flex-direction: column; align-items: center; padding-top: 10px; }
.app .mark { width: 8px; height: 4px; margin-top: 5px; border-radius: 2px; background: #9a9a9a; }
.current { background: #2d2d2d; border: 1px solid #363636; padding-top: 9px; }
.current .mark { width: 20px; background: #dc9be8; }
.tray { margin-left: auto; display: flex; align-items: center; padding-right: 25px; font-size: 15px; line-height: 20px; letter-spacing: -.35px; }
.t-cloud { margin-left: 23px; }
.t-nv { margin-left: 21px; }
.lang { width: 40px; margin-left: 20px; padding-bottom: 2px; text-align: center; }
.t-wifi { margin-left: 17px; }
.t-vol { margin-left: 10px; }
.t-bat { margin-left: 10px; }
.clock { width: 98px; padding-bottom: 2px; text-align: right; white-space: nowrap; }
.t-bell { margin-left: 11px; }
.t-cop { margin-left: 22px; }
.pre { font: 700 8.500px "Open Sans", sans-serif; letter-spacing: .3px; fill: #1c1c1c; }
```
